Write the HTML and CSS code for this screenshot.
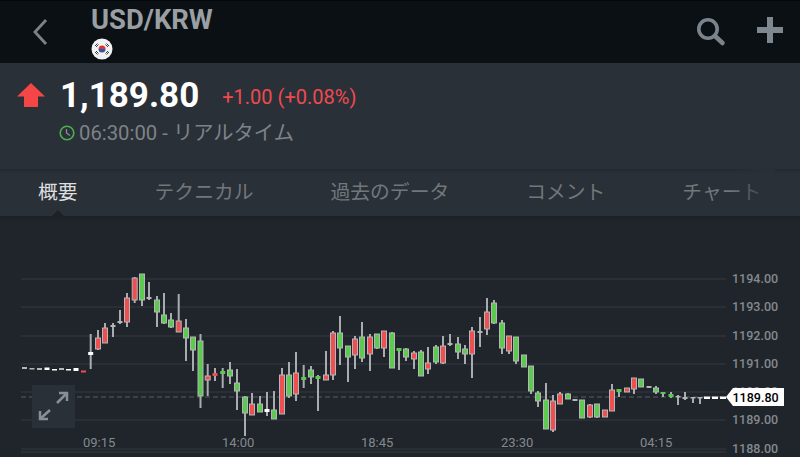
FILE: index.html
```html
<!DOCTYPE html>
<html lang="ja">

<head>
    <meta charset="UTF-8">
    <meta name="viewport" content="width=device-width, initial-scale=1.0">
    <title>USD/KRW</title>
    <link rel="stylesheet" href="styles.css">
</head>

<body>
    <header class="top-bar">
        <a href="#" class="back">
            <svg width="16" height="28" viewBox="0 0 16 28">
                <path d="M14 2 L3 14 L14 26" fill="none" stroke="#7b8288" stroke-width="2.8" />
            </svg>
        </a>
        <div class="instrument">
            <h1>USD/KRW</h1>
            <svg class="flag" width="22" height="22" viewBox="0 0 22 22">
                <circle cx="11" cy="11" r="10.5" fill="#f1f1f1" />
                <path d="M7.5 11 A3.5 3.5 0 0 1 14.5 11 Z" fill="#e0352f" />
                <path d="M7.5 11 A3.5 3.5 0 0 0 14.5 11 Z" fill="#2a5aa8" />
                <path d="M4 8 L6.5 5.5 M5 9 L7.5 6.5 M15.5 5.5 L18 8 M14.5 6.5 L17 9 M4 14 L6.5 16.5 M5 13 L7.5 15.5 M15.5 16.5 L18 14 M14.5 15.5 L17 13"
                    stroke="#3a3f44" stroke-width="1" />
            </svg>
        </div>
        <div class="actions">
            <svg width="30" height="30" viewBox="0 0 30 30">
                <circle cx="12" cy="12" r="9.2" fill="none" stroke="#7b848c" stroke-width="3.6" />
                <path d="M19 19 L26.500 26" stroke="#7b848c" stroke-width="4.500" stroke-linecap="round" />
            </svg>
            <svg width="26" height="26" viewBox="0 0 26 26">
                <path d="M10 0 H16 V10 H26 V16 H16 V26 H10 V16 H0 V10 H10 Z" fill="#7f878f" />
            </svg>
        </div>
    </header>

    <section class="quote">
        <div class="price-row">
            <svg class="up-arrow" width="28" height="24" viewBox="0 0 28 24">
                <path d="M14 0 L28 13.500 H21 V24 H7 V13.500 H0 Z" fill="#f44646" />
            </svg>
            <span class="price">1,189.80</span>
            <span class="change">+1.00 (+0.08%)</span>
        </div>
        <div class="time-row">
            <svg width="16" height="16" viewBox="0 0 16 16">
                <circle cx="8" cy="8" r="6.8" fill="none" stroke="#4fae4f" stroke-width="1.6" />
                <path d="M7.500 4 V8 L11 10.500" fill="none" stroke="#8a8f94" stroke-width="1.3" />
            </svg>
            <span>06:30:00 - リアルタイム</span>
        </div>
    </section>

    <nav class="tabs">
        <a href="#" class="tab active">概要</a>
        <a href="#" class="tab">テクニカル</a>
        <a href="#" class="tab">過去のデータ</a>
        <a href="#" class="tab">コメント</a>
        <a href="#" class="tab">チャート</a>
    </nav>

    <main class="chart">
        <svg id="candles" width="800" height="241" viewBox="0 216 800 241"></svg>
        <button class="expand">
            <svg width="43" height="43" viewBox="0 0 43 43">
                <path d="M25 18 L35 8 M27 8 H35 V16 M18 25 L8 34 M8 26 V34 H16" fill="none" stroke="#8a8f94" stroke-width="2.500" />
            </svg>
        </button>
    </main>

    <script src="candles.js"></script>
</body>

</html>
```

FILE: styles.css
```css
body {
    margin: 0;
    width: 800px;
    height: 457px;
    overflow: hidden;
    display: flex;
    flex-direction: column;
    font-family: Roboto, "Noto Sans CJK JP", sans-serif;
    background: #1f252b;
}

a {
    text-decoration: none;
}

/* Bar atas */
.top-bar {
    height: 63px;
    flex: none;
    display: flex;
    box-sizing: border-box;
    border-top: 1px solid #05080a;
    background: #0b1014;
}

.back {
    margin: 17px 0 0 32px;
}

.instrument {
    margin-left: 43px;
}

.instrument h1 {
    margin: 3px 0 0;
    font-size: 27.400px;
    line-height: 33px;
    font-weight: 700;
    color: #9a9fa3;
}

.flag {
    display: block;
    margin-top: 1px;
}

.actions {
    margin-left: auto;
    margin-right: 17px;
    padding-top: 16px;
    display: flex;
    align-items: flex-start;
    gap: 31px;
}

/* Harga */
.quote {
    height: 106px;
    flex: none;
    box-sizing: border-box;
    padding: 12px 0 0 17px;
    background: #2a3038;
}

.price-row {
    display: flex;
    align-items: center;
    height: 40px;
}

.price {
    margin-left: 15px;
    font-size: 35px;
    font-weight: 700;
    color: #fff;
}

.change {
    margin-left: 23px;
    font-size: 20px;
    color: #ef4a4f;
    padding-top: 3px;
}

.time-row {
    display: flex;
    align-items: center;
    gap: 4px;
    margin: 6px 0 0 42px;
    font-size: 20.300px;
    line-height: 24px;
    color: #7e8387;
}

/* Tab */
.tabs {
    position: relative;
    height: 47px;
    flex: none;
    box-sizing: border-box;
    display: flex;
    align-items: center;
    gap: 77px;
    padding: 0 0 5px 38px;
    overflow: hidden;
    white-space: nowrap;
    font-size: 19.800px;
    background: linear-gradient(#24292f, #2a3038 5px);
}

.tab {
    flex: none;
    color: #72777b;
}

.tab.active {
    color: #dcdedf;
}

.tab.active::after {
    content: "";
    position: absolute;
    left: 52px;
    bottom: 0;
    border-left: 6px solid transparent;
    border-right: 6px solid transparent;
    border-bottom: 6px solid #1c2126;
}

.tabs::after {
    content: "";
    position: absolute;
    top: 0;
    right: 25px;
    width: 45px;
    height: 100%;
    background: linear-gradient(to right, rgba(42, 48, 56, 0), #2a3038);
}

/* Grafik */
.chart {
    position: relative;
    flex: 1;
    background: linear-gradient(#1b2025, #1f252b 6px);
}

#candles {
    display: block;
}

#candles text {
    font-family: Roboto, sans-serif;
    font-size: 13px;
    fill: #85898d;
}

#candles .level {
    font-size: 12.500px;
    font-weight: 500;
}

#candles .tag-text {
    fill: #000;
    font-size: 12.500px;
    font-weight: 500;
}

.expand {
    position: absolute;
    left: 32px;
    top: 169px;
    width: 43px;
    height: 43px;
    padding: 0;
    border: 0;
    background: #2a3038;
}

.expand svg {
    display: block;
}
```

FILE: candles.js
```js
// [x tengah, atas sumbu, bawah sumbu, atas badan, bawah badan, warna]
const R = '#ee5052', G = '#5cc94f', W = '#ffffff', A = '#b4b6b8';

const candles = [
    [24.5, 0, 0, 367, 369, A], [32, 0, 0, 368, 369, A], [39.5, 0, 0, 368, 370, A], [47, 0, 0, 367.5, 370, W],
    [54.5, 0, 0, 369, 370, W], [61.5, 0, 0, 368, 370, A], [68.5, 0, 0, 369, 370, W], [76, 0, 0, 368, 371, W],
    [83.5, 0, 0, 370.5, 372.5, R], [90.7, 334, 369, 352, 355, W], [98, 330, 350, 338, 349, R], [105, 323, 343, 328, 343, R],
    [113, 323, 337, 325, 327, A], [120, 310, 324, 321, 323, A], [127, 293, 327, 298, 322, R], [134.7, 277, 303, 278, 300, R],
    [142, 274, 306, 274, 300, G], [149, 282, 300, 297, 299, A], [157, 296, 327, 300, 312, G], [164, 293, 324, 315, 323, G],
    [171, 313, 328, 320, 327, G], [178.7, 294, 332, 321, 332, R], [186, 319, 361, 328, 338, G], [193, 337, 371, 337, 350, G],
    [200.5, 334, 408, 341, 396, G], [207.7, 364, 396, 376, 380, R], [215, 368, 381, 373, 376, R], [222.7, 368, 388, 371, 374, G],
    [230, 362, 384, 370, 376, G], [237, 369, 410, 383, 391, G], [245, 396, 436, 397, 413, G], [252, 393, 415, 404, 415, R],
    [260, 396, 412, 404, 412, G], [267, 392, 416, 409, 412, W], [274, 391, 419, 410, 419, G], [282, 368, 414, 375, 414, R],
    [289, 362, 398, 375, 396, G], [296, 352, 401, 373, 394, R], [303.7, 365, 388, 377, 380, G], [311, 366, 384, 370, 377, G],
    [318, 375, 411, 376, 379, G], [326, 351, 380, 375, 380, R], [333, 331, 380, 333, 375, R], [340, 316, 365, 333, 348, G],
    [348, 346, 382, 346, 357, G], [355, 336, 369, 339, 355, R], [362, 322, 362, 337, 358, G], [370, 334, 371, 337, 354, R],
    [377, 334, 349, 334, 348, G], [384, 331, 357, 331, 348, R], [392, 332, 368, 333, 368, G], [399, 348, 370, 348, 351, G],
    [406, 348, 361, 349, 357, G], [414, 351, 369, 353, 359, R], [421, 350, 376, 352, 376, G], [428, 347, 374, 363, 369, R],
    [436, 345, 364, 347, 362, G], [443, 336, 364, 346, 363, R], [450, 334, 346, 343, 345, A], [458, 337, 359, 344, 352, G],
    [465, 345, 364, 349, 354, G], [472, 327, 378, 331, 354, R], [480, 317, 347, 331, 333, A], [487, 298, 335, 312, 329, R],
    [494, 300, 324, 303, 323, G], [502, 320, 354, 323, 348, G], [509, 336, 354, 336, 351, R], [516, 337, 364, 337, 361, G],
    [524, 0, 0, 355, 367, G], [531, 366, 394, 366, 391, G], [538, 391, 407, 393, 401, G], [546, 383, 429, 400, 429, G],
    [553, 395, 432, 401, 430, R], [560, 392, 404, 394, 404, R], [568, 393, 399, 394, 399, G], [575, 0, 0, 399, 401, A],
    [582, 0, 0, 400, 418, G], [590, 404, 418, 405, 417, R], [597, 404, 418, 404, 417, G], [605, 0, 0, 410, 417, R],
    [612, 384, 411, 390, 411, R], [619, 389, 397, 389, 392, G], [627, 0, 0, 388, 392, R], [634, 378, 394, 378, 389, R],
    [641, 0, 0, 379, 387, G], [649, 0, 0, 386, 388, A], [656, 386, 394, 388, 392, G], [663, 392, 397, 392, 394, G],
    [671, 392, 398, 394, 397, G], [678, 395, 405, 396, 397, A], [685, 392, 400, 397, 399, A], [693, 397, 403, 397, 398, A],
    [700, 397, 404, 397, 398, A]
];

const levels = [
    [279, '1194.00'], [307, '1193.00'], [336, '1192.00'], [364, '1191.00'],
    [392, '1190.00'], [420, '1189.00'], [449, '1188.00']
];

const times = [[83, '09:15'], [222, '14:00'], [361, '18:45'], [501, '23:30'], [640, '04:15']];

let out = '';

levels.forEach(([y, label]) => {
    out += `<rect x="21" y="${y - 0.5}" width="705" height="1" fill="#353b41"/>`;
    out += `<text class="level" x="732" y="${y + 4}">${label}</text>`;
});
out += '<rect x="21" y="451.500" width="705" height="1" fill="#353b41"/>';
out += '<path d="M21 397 H726" stroke="#3c4147" stroke-width="2" stroke-dasharray="5 3"/>';

times.forEach(([x, label]) => {
    out += `<text x="${x}" y="447">${label}</text>`;
});

candles.forEach(([x, top, bottom, bodyTop, bodyBottom, color]) => {
    if (top) {
        out += `<rect x="${x - 1}" y="${top}" width="2" height="${bottom - top}" fill="#a9acae"/>`;
    }
    const h = bodyBottom - bodyTop;
    if (h < 4) {
        out += `<rect x="${x - 2.5}" y="${bodyTop}" width="5" height="${Math.max(h, 1.5)}" fill="${color}"/>`;
    } else {
        out += `<rect x="${x - 2.5}" y="${bodyTop}" width="5" height="${h}" fill="${color}" stroke="#b4b6b8"/>`;
    }
});

// garis harga terakhir dan labelnya
out += '<path d="M704 397.700 H726" stroke="#fff" stroke-width="2.500" stroke-dasharray="6 2"/>';
out += '<path d="M726 397 L733 388 H784 V406 H733 Z" fill="#fff"/>';
out += '<text class="tag-text" x="732.500" y="402">1189.80</text>';

document.getElementById('candles').innerHTML = out;
```
